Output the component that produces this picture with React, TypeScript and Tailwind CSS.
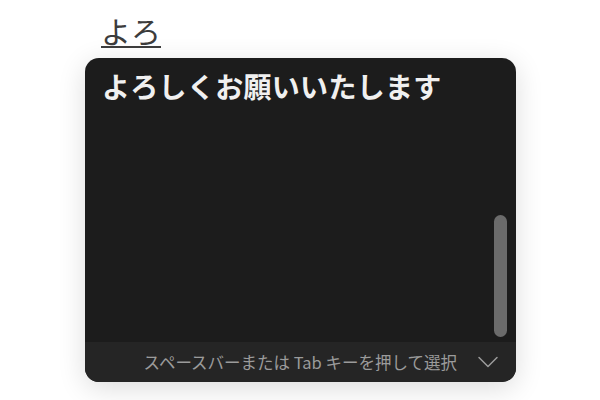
import { ChevronDown } from 'lucide-react'

const jp = '"Noto Sans CJK JP", "Noto Sans", sans-serif'

export default function App() {
  return (
    <div className="h-[400px] w-[600px] overflow-hidden bg-white" style={{ fontFamily: jp }}>
      <div className="pl-[101px] pt-[12px]">
        <span className="text-[30px] leading-[36px] text-[#3c3c3c] underline decoration-[2px] underline-offset-[3px]">
          よろ
        </span>
      </div>

      <div className="ml-[85px] mt-[10px] flex h-[324px] w-[431px] flex-col overflow-hidden rounded-[14px] bg-[#1c1c1c] shadow-[0_6px_28px_rgba(0,0,0,0.14)]">
        <div className="relative flex-1">
          <p className="pl-[17px] pt-[10px] text-[28px] font-bold leading-[36px] tracking-[0.3px] text-[#f0f0f0]">
            よろしくお願いいたします
          </p>
          <div className="absolute right-[9px] bottom-[5px] h-[122px] w-[13px] rounded-full bg-[#6b6b6b]" />
        </div>
        <div className="flex h-[40px] items-center justify-end bg-[#252525] pr-[10px]">
          <span className="text-[16.5px] text-[#9b9b9b]">スペースバーまたは Tab キーを押して選択</span>
          <ChevronDown className="ml-[13px] text-[#9b9b9b]" size={36} strokeWidth={1} />
        </div>
      </div>
    </div>
  )
}
